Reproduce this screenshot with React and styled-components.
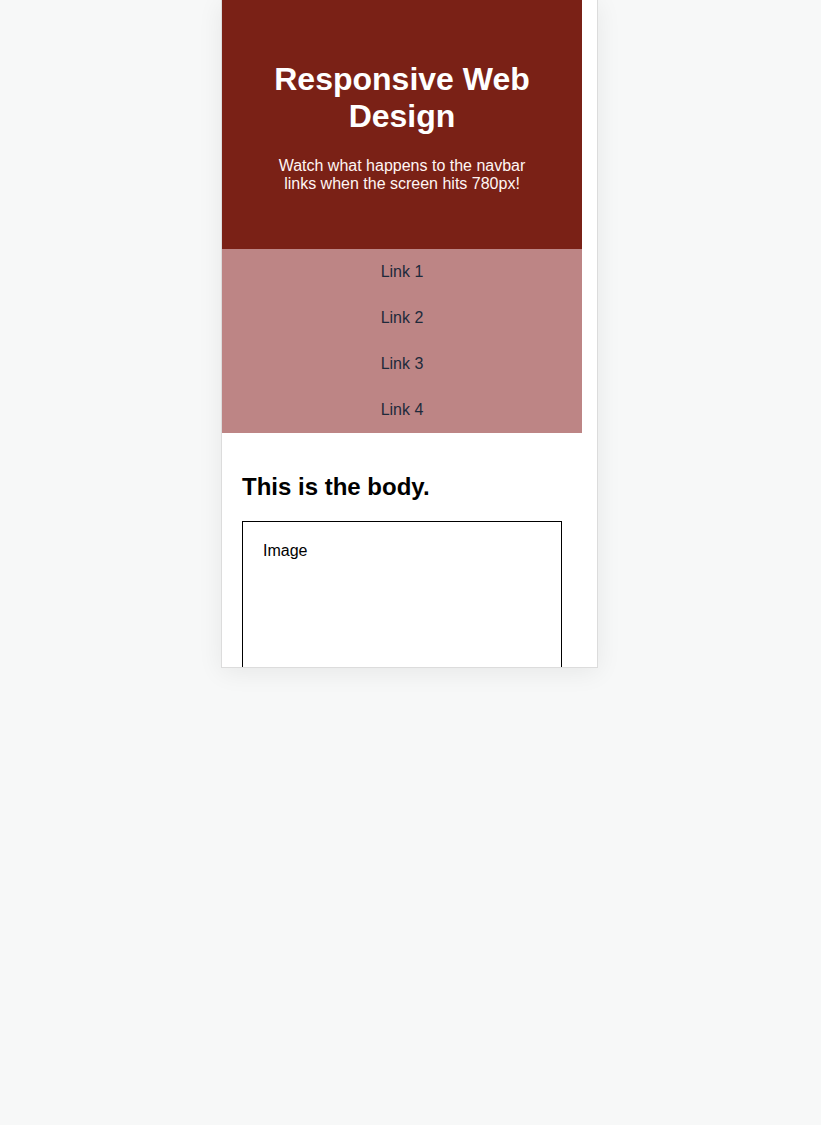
import styled, { createGlobalStyle } from 'styled-components';

const GlobalStyle = createGlobalStyle`
    html, body {
        margin: 0;
        padding: 0;
        background: #f7f8f8;
        font-family: "Liberation Sans", Arial, sans-serif;
    }
`;

const Page = styled.div`
    display: flex;
    justify-content: center;
    padding-right: 2px;
    min-height: 1125px;
    box-sizing: border-box;
`;

const Frame = styled.div`
    width: 377px;
    height: 668px;
    box-sizing: border-box;
    border: 1px solid #dcdcdc;
    border-top: none;
    background: #ffffff;
    box-shadow: 0 4px 24px rgba(0, 0, 0, 0.07);
    overflow: hidden;
    display: flex;
`;

const Screen = styled.div`
    width: 360px;
    flex-shrink: 0;
`;

const Header = styled.header`
    background: #7a2116;
    padding: 40px;
    text-align: center;
    color: #ffffff;
`;

const Title = styled.h1`
    font-size: 32px;
    font-weight: 700;
    margin: 21.44px 0;
`;

const Subtitle = styled.p`
    font-size: 16px;
    margin: 16px 0;
    color: #fff6f4;
`;

const Nav = styled.nav`
    background: #bd8585;
    display: flex;
    flex-direction: column;
`;

const NavLink = styled.a`
    display: block;
    padding: 14px 0;
    text-align: center;
    font-size: 16px;
    line-height: 18px;
    color: #1e2a3b;
    text-decoration: none;
`;

const Main = styled.main`
    padding: 20px;
`;

const Heading = styled.h2`
    font-size: 24px;
    font-weight: 700;
    margin: 19.92px 0;
    color: #000;
`;

const ImageBox = styled.div`
    border: 1px solid #000;
    padding: 20px;
    height: 260px;
    font-size: 16px;
    color: #000;
`;

const links = ['Link 1', 'Link 2', 'Link 3', 'Link 4'];

export default function App() {
    return (
        <>
            <GlobalStyle />
            <Page>
                <Frame>
                    <Screen>
                        <Header>
                            <Title>Responsive Web Design</Title>
                            <Subtitle>Watch what happens to the navbar links when the screen hits 780px!</Subtitle>
                        </Header>
                        <Nav>
                            {links.map((item) => (
                                <NavLink key={item} href="#">{item}</NavLink>
                            ))}
                        </Nav>
                        <Main>
                            <Heading>This is the body.</Heading>
                            <ImageBox>Image</ImageBox>
                        </Main>
                    </Screen>
                </Frame>
            </Page>
        </>
    );
}
